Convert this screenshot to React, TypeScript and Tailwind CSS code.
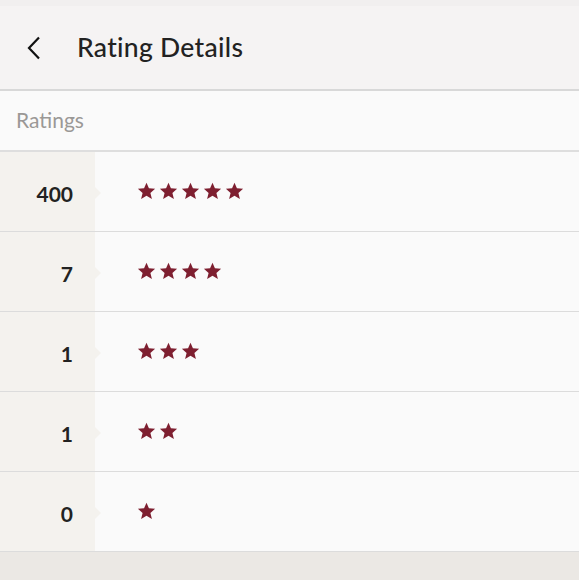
import type { ReactNode } from 'react'

const ROWS = [
  { count: 400, stars: 5 },
  { count: 7, stars: 4 },
  { count: 1, stars: 3 },
  { count: 1, stars: 2 },
  { count: 0, stars: 1 },
]

function Star() {
  return (
    <svg width="19" height="18" viewBox="0 0 24 23" className="shrink-0">
      <path
        d="M12 0.8l3.1 7.3 7.9 0.6-6 5.2 1.9 7.7L12 17.5l-6.9 4.1 1.9-7.7-6-5.2 7.9-0.6z"
        fill="#7e1f30"
      />
    </svg>
  )
}

function Row({ count, children }: { count: number; children: ReactNode }) {
  return (
    <div className="flex h-20 border-b border-[#dcdcdc]">
      <div className="relative flex w-[95px] shrink-0 items-center justify-end bg-[#f4f2ee] pr-[22px] pt-[4px]">
        <span className="text-[21px] font-bold text-[#222]">{count}</span>
        <span className="absolute left-full top-1/2 -mt-[5px] h-0 w-0 border-y-[6px] border-l-[6px] border-y-transparent border-l-[#f4f2ee]" />
      </div>
      <div className="flex flex-1 items-center gap-[3px] bg-[#fafafa] pb-[1px] pl-[42px]">{children}</div>
    </div>
  )
}

export default function App() {
  return (
    <div className="flex h-[580px] w-[579px] flex-col bg-[#ebe8e4] font-['Lato',sans-serif]">
      <div className="h-[6px] bg-[#f1efef]" />
      <div className="flex h-[85px] items-center border-b-2 border-[#d8d8d8] bg-[#f5f3f3]">
        <svg width="14" height="24" viewBox="0 0 14 24" className="ml-[27px] mr-[36px]">
          <path d="M12 1.5L2 12l10 10.5" fill="none" stroke="#111" strokeWidth="2.2" />
        </svg>
        <h1 className="text-[26.5px] font-medium tracking-[0.3px] text-[#222]">Rating Details</h1>
      </div>
      <div className="flex h-[61px] items-center border-b-2 border-[#dedede] bg-[#fafafa] pb-[2px] pl-4">
        <span className="text-[21px] text-[#9a9896]">Ratings</span>
      </div>
      {ROWS.map((r, i) => (
        <Row key={i} count={r.count}>
          {Array.from({ length: r.stars }).map((_, j) => (
            <Star key={j} />
          ))}
        </Row>
      ))}
    </div>
  )
}
